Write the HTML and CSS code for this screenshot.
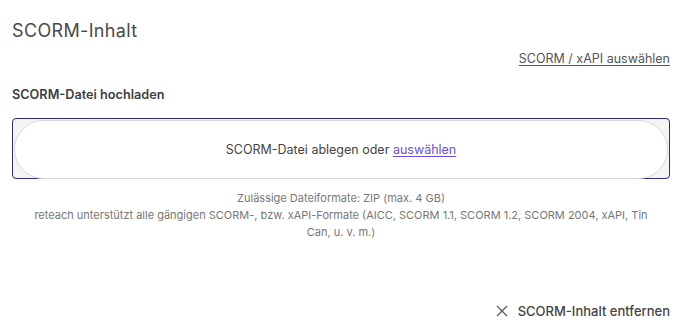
FILE: index.html
```html
<!DOCTYPE html>
<html lang="de">
<head>
<meta charset="utf-8">
<title>SCORM-Inhalt</title>
<link rel="stylesheet" href="styles.css">
</head>
<body>
<div class="panel">
  <h2 class="title">SCORM-Inhalt</h2>
  <div class="choose-row"><a class="choose-link" href="#">SCORM / xAPI auswählen</a></div>
  <div class="label">SCORM-Datei hochladen</div>
  <div class="dropzone">
    <div class="drop-inner">SCORM-Datei ablegen oder&nbsp;<a class="pick" href="#">auswählen</a></div>
  </div>
  <div class="help">
    <div>Zulässige Dateiformate: ZIP (max. 4 GB)</div>
    <div>reteach unterstützt alle gängigen SCORM-, bzw. xAPI-Formate (AICC, SCORM 1.1, SCORM 1.2, SCORM 2004, xAPI, Tin Can, u. v. m.)</div>
  </div>
  <div class="remove-row">
    <a class="remove" href="#">
      <svg class="x-icon" width="12" height="12" viewBox="0 0 12 12"><path d="M1 1 L11 11 M11 1 L1 11" stroke="#555" stroke-width="1.2" fill="none"/></svg>
      <span>SCORM-Inhalt entfernen</span>
    </a>
  </div>
</div>
</body>
</html>
```
FILE: styles.css
```css
html, body {
  margin: 0;
  padding: 0;
  background: #ffffff;
}
body {
  font-family: Inter, "Noto Sans", sans-serif;
  color: #444;
}
.panel {
  padding: 19px 9px 0 12px;
}
.title {
  margin: 0;
  font-size: 18px;
  font-weight: 400;
  line-height: 24px;
  letter-spacing: 0.35px;
  color: #4a4a4a;
}
.choose-row {
  display: flex;
  justify-content: flex-end;
  margin-top: 7px;
}
.choose-link {
  font-size: 12.5px;
  line-height: 18px;
  color: #555;
  text-decoration: underline;
  text-underline-offset: 2px;
}
.label {
  margin-top: 18px;
  font-size: 12.7px;
  font-weight: 600;
  line-height: 18px;
  color: #3f3f3f;
}
.dropzone {
  margin-top: 14px;
  border: 1px solid #35297e;
  border-radius: 4px;
  background: #f4f4f4;
  padding: 1px 1px 0 1px;
  display: flex;
}
.drop-inner {
  flex: 1;
  height: 57px;
  margin-bottom: -1px;
  border: 1px solid #d8d8d8;
  border-radius: 30px;
  background: #fff;
  display: flex;
  align-items: center;
  justify-content: center;
  font-size: 12.5px;
  color: #444;
}
.pick {
  color: #6a4fe0;
  text-decoration: underline;
  text-underline-offset: 2px;
}
.help {
  margin-top: 11px;
  padding: 0 16px;
  text-align: center;
  font-size: 11px;
  line-height: 17px;
  color: #777;
}
.remove-row {
  display: flex;
  justify-content: flex-end;
  margin-top: 62px;
}
.remove {
  display: flex;
  align-items: center;
  gap: 10px;
  font-size: 13px;
  font-weight: 500;
  color: #444;
  text-decoration: none;
}
.x-icon {
  display: block;
}
```
